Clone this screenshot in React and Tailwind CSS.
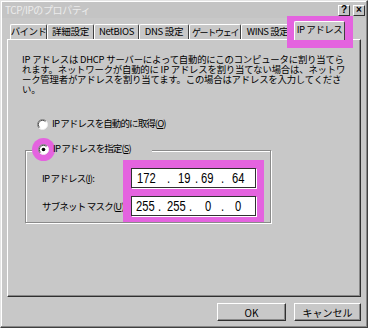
import React from "react";

const tabs = [
  { label: "バインド", w: "w-[37px]", t: "tracking-[-0.6px] text-[9.5px]" },
  { label: "詳細設定", w: "w-[47px]", t: "tracking-[-0.3px] text-[9.5px]" },
  { label: "NetBIOS", w: "w-[45px]", t: "tracking-[-0.3px] text-[9.5px]" },
  { label: "DNS 設定", w: "w-[50px]", t: "tracking-[-0.3px] text-[9.5px]" },
  { label: "ゲートウェイ", w: "w-[52px]", t: "tracking-[-1.3px] text-[9px]" },
  { label: "WINS 設定", w: "w-[53px]", t: "tracking-[-0.5px] text-[9.5px]" },
];

const digitFont = "font-['Liberation_Sans',sans-serif]";

function Radio({ checked }) {
  return (
    <svg width="11" height="11" viewBox="0 0 12 12" className="relative z-10 shrink-0">
      <circle cx="6" cy="6" r="5.5" fill="#fff" />
      <path d="M2.1 9.9 A5.5 5.5 0 0 1 9.9 2.1" stroke="#808080" strokeWidth="1" fill="none" />
      <path d="M2.8 9.2 A4.5 4.5 0 0 1 9.2 2.8" stroke="#404040" strokeWidth="1" fill="none" />
      <path d="M9.9 2.1 A5.5 5.5 0 0 1 2.1 9.9" stroke="#f0f0f0" strokeWidth="1" fill="none" />
      {checked && <circle cx="6" cy="6" r="2" fill="#000" />}
    </svg>
  );
}

function Button({ children, w }) {
  return (
    <div
      className={`${w} h-[18px] flex items-center justify-center text-[10px] border border-t-white border-l-white border-r-[#303030] border-b-[#303030] shadow-[inset_-1px_-1px_0_#888]`}
    >
      {children}
    </div>
  );
}

// one octet / dot of the IP field, squeezed like the narrow system font
function Seg({ w, children }) {
  return (
    <span className={`${w} shrink-0 whitespace-nowrap`}>
      <span className="inline-block origin-left scale-x-[0.8]">{children}</span>
    </span>
  );
}

export default function App() {
  return (
    <div className="w-[368px] h-[328px] bg-[#c8c8c8] p-px border border-t-[#e4e4e4] border-l-[#e4e4e4] border-r-[#404040] border-b-[#404040] shadow-[inset_-1px_-1px_0_#888,inset_1px_1px_0_#fff] font-['Noto_Sans_CJK_JP',sans-serif] text-black overflow-hidden relative">
      {/* title bar (inactive) */}
      <div className="h-[16px] bg-[#c4c4c4] flex items-center justify-between pl-[3px] pr-[1px]">
        <span className="text-[10px] leading-none text-[#ececec] tracking-[-0.4px]">TCP/IPのプロパティ</span>
        <div className="flex gap-[3px]">
          <div className="w-[12px] h-[11px] flex items-center justify-center text-[10px] font-bold leading-none border border-t-white border-l-white border-r-[#303030] border-b-[#303030] font-['Liberation_Sans',sans-serif]">?</div>
          <div className="w-[12px] h-[11px] flex items-center justify-center text-[10px] font-bold leading-none border border-t-white border-l-white border-r-[#303030] border-b-[#303030] font-['Liberation_Sans',sans-serif]">×</div>
        </div>
      </div>

      <div className="px-[5px]">
        {/* tabs */}
        <div className="h-[21px] flex items-end pl-[3px]">
          {tabs.map((t) => (
            <div
              key={t.label}
              className={`${t.w} ${t.t} h-[15px] flex items-center justify-center leading-none whitespace-nowrap border-t border-l border-r border-t-white border-l-white border-r-[#404040] rounded-t-[2px]`}
            >
              {t.label}
            </div>
          ))}
          <div className="relative z-10 w-[51px] h-[19px] -mb-px bg-[#c8c8c8] flex items-center justify-center text-[9.5px] leading-none tracking-[-0.5px] whitespace-nowrap border-t border-l border-r border-t-white border-l-white border-r-[#404040] rounded-t-[2px] pb-[2px]">
            IP アドレス
          </div>
        </div>

        {/* panel */}
        <div className="h-[258px] border border-t-white border-l-white border-r-[#303030] border-b-[#303030] shadow-[inset_-1px_-1px_0_#888] pl-[14px] pt-[14px]">
          <p className="text-[9.4px] leading-[10px] whitespace-nowrap tracking-[-0.2px]">
            IP アドレスは DHCP サーバーによって自動的にこのコンピュータに割り当てら
            <br />
            れます。ネットワークが自動的に IP アドレスを割り当てない場合は、ネットワ
            <br />
            ーク管理者がアドレスを割り当てます。この場合はアドレスを入力してくださ
            <br />
            い。
          </p>

          <div className="mt-[24px] ml-[15px] h-[12px] flex items-center gap-[4px]">
            <Radio />
            <span className="text-[9.5px] leading-none tracking-[-0.9px] whitespace-nowrap">
              IP アドレスを自動的に取得(<u>O</u>)
            </span>
          </div>

          {/* group box */}
          <div className="mt-[20px] ml-[3px] w-[246px] border border-[#8a8a8a] shadow-[inset_1px_1px_0_#fff,1px_1px_0_#fff]">
            <div className="relative -mt-[8px] ml-[10px] w-[116px] h-[12px] bg-[#c8c8c8] flex items-center gap-[4px] pl-[2px]">
              <div className="absolute left-[-4px] top-[-5px] w-[23px] h-[23px] rounded-full bg-[#e463df]" />
              <Radio checked />
              <span className="relative text-[9.5px] leading-none tracking-[-0.9px] whitespace-nowrap">
                IP アドレスを指定(<u>S</u>)
              </span>
            </div>

            <div className="mt-[5px] flex">
              <div className="w-[97px] pl-[16px] pt-[8px] flex flex-col gap-[8px]">
                <div className="h-[20px] flex items-center text-[9.5px] tracking-[-0.8px] whitespace-nowrap">
                  IP アドレス(<u>I</u>):
                </div>
                <div className="h-[20px] flex items-center text-[9.5px] tracking-[-0.8px] whitespace-nowrap">
                  サブネット マスク(<u>U</u>):
                </div>
              </div>
              <div className="w-[141px] bg-[#e463df] pt-[8px] pl-[8px] pb-[6px] flex flex-col gap-[8px]">
                <div className={`w-[125px] h-[20px] bg-white border border-[#303030] shadow-[1px_1px_0_#fff] flex items-center pl-[5px] text-[14px] leading-none ${digitFont}`}>
                  <Seg w="w-[30px]">172</Seg>
                  <Seg w="w-[11px]">.</Seg>
                  <Seg w="w-[17px]">19</Seg>
                  <Seg w="w-[6px]">.</Seg>
                  <Seg w="w-[20px]">69</Seg>
                  <Seg w="w-[11px]">.</Seg>
                  <Seg w="w-[14px]">64</Seg>
                </div>
                <div className={`w-[125px] h-[20px] bg-white border border-[#303030] shadow-[1px_1px_0_#fff] flex items-center pl-[4px] text-[14px] leading-none ${digitFont}`}>
                  <Seg w="w-[22px]">255</Seg>
                  <Seg w="w-[9px]">.</Seg>
                  <Seg w="w-[22px]">255</Seg>
                  <Seg w="w-[16px]">.</Seg>
                  <Seg w="w-[16px]">0</Seg>
                  <Seg w="w-[14px]">.</Seg>
                  <Seg w="w-[8px]">0</Seg>
                </div>
              </div>
            </div>
          </div>
        </div>

        {/* buttons */}
        <div className="mt-[6px] flex justify-end gap-[8px]">
          <Button w="w-[69px]">OK</Button>
          <Button w="w-[67px]">キャンセル</Button>
        </div>
      </div>

      {/* annotation frame around selected tab */}
      <div className="absolute left-[286px] top-[15px] w-[66px] h-[32px] border-[8px] border-[#e463df] pointer-events-none" />
    </div>
  );
}
